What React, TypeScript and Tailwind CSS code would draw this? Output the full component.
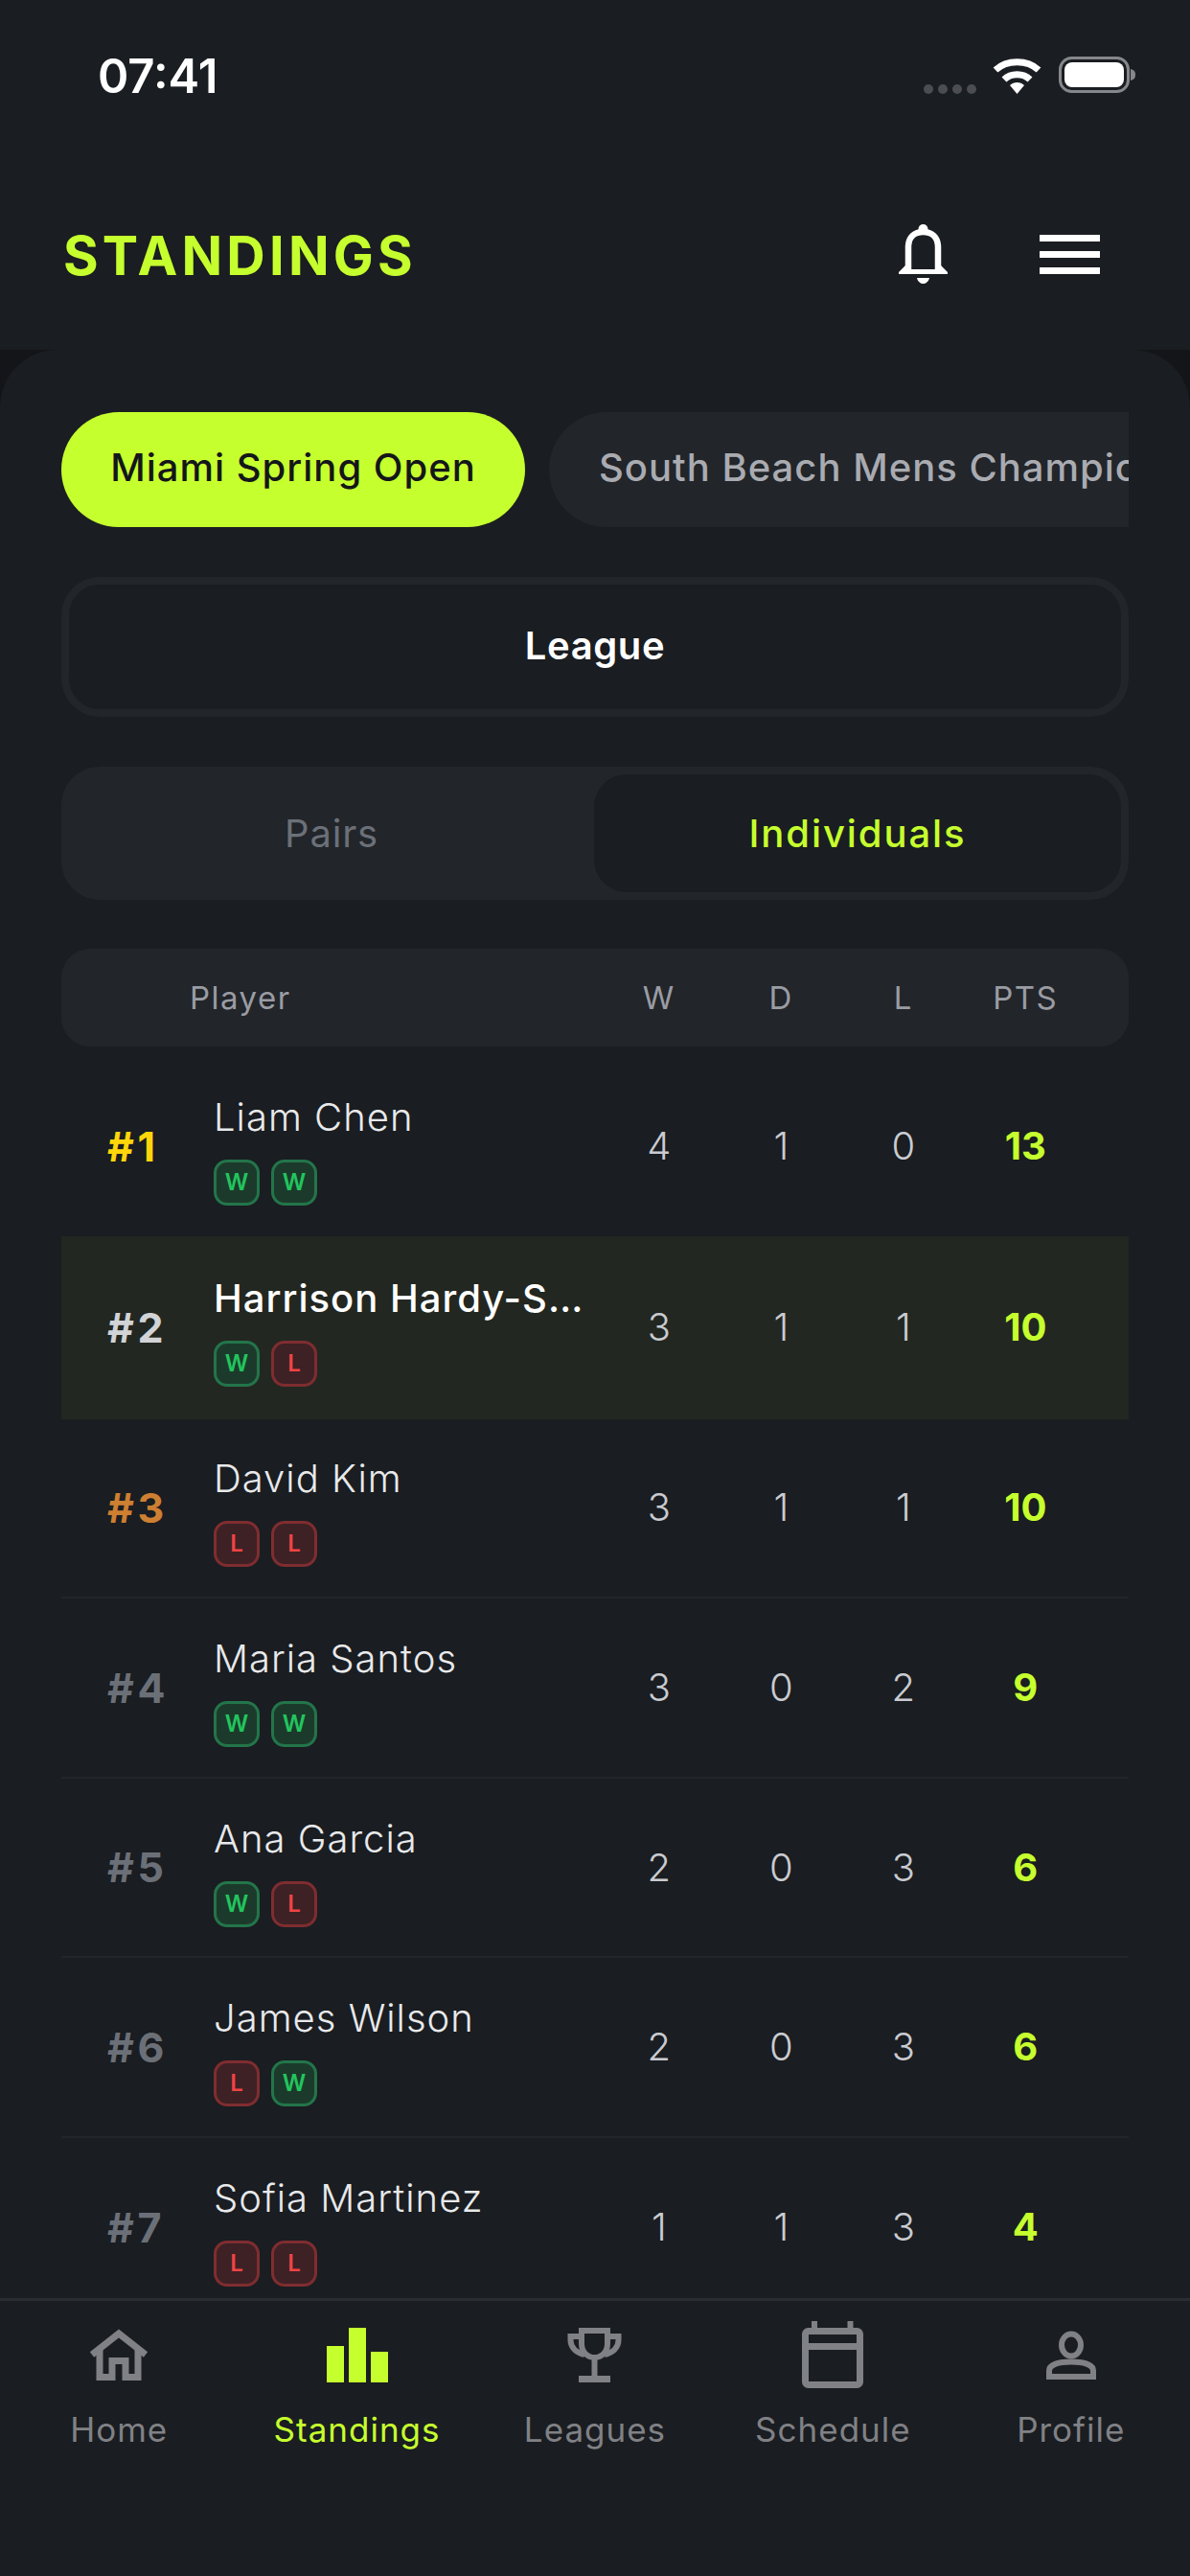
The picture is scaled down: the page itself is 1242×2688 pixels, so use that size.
const players = [
  { rank: 1, name: "Liam Chen", form: ["W", "W"], w: 4, d: 1, l: 0, pts: 13 },
  { rank: 2, name: "Harrison Hardy-Smith", form: ["W", "L"], w: 3, d: 1, l: 1, pts: 10, me: true },
  { rank: 3, name: "David Kim", form: ["L", "L"], w: 3, d: 1, l: 1, pts: 10 },
  { rank: 4, name: "Maria Santos", form: ["W", "W"], w: 3, d: 0, l: 2, pts: 9 },
  { rank: 5, name: "Ana Garcia", form: ["W", "L"], w: 2, d: 0, l: 3, pts: 6 },
  { rank: 6, name: "James Wilson", form: ["L", "W"], w: 2, d: 0, l: 3, pts: 6 },
  { rank: 7, name: "Sofia Martinez", form: ["L", "L"], w: 1, d: 1, l: 3, pts: 4 },
];

function rankColor(rank: number) {
  if (rank === 1) return "text-[#ffd60a]";
  if (rank === 2) return "text-[#d1d3d6]";
  if (rank === 3) return "text-[#cd7f32]";
  return "text-[#6b7078]";
}

function StatusBar() {
  return (
    <div className="flex items-center justify-between h-[40px] pl-[102px] pr-[57px]">
      <span className="text-[49px] font-semibold leading-none text-white mt-[2px]">07:41</span>
      <div className="flex items-center">
        <div className="flex gap-[5px] mt-[30px] mr-[17px]">
          <div className="w-[10px] h-[10px] rounded-full bg-[#4b4d52]" />
          <div className="w-[10px] h-[10px] rounded-full bg-[#4b4d52]" />
          <div className="w-[10px] h-[10px] rounded-full bg-[#4b4d52]" />
          <div className="w-[10px] h-[10px] rounded-full bg-[#4b4d52]" />
        </div>
        <svg width="51" height="39" viewBox="0 0 51 39" fill="none" className="mr-[18px]">
          <path d="M3 14 C15 3 36 3 48 14" stroke="#fff" strokeWidth="7" />
          <path d="M12 24 C19 17 32 17 39 24" stroke="#fff" strokeWidth="7" />
          <path d="M18 30 C22 26 29 26 33 30 L25.5 39 Z" fill="#fff" />
        </svg>
        <svg width="80" height="38" viewBox="0 0 80 38" fill="none">
          <rect x="1.5" y="1.5" width="71" height="35" rx="12" stroke="#85878b" strokeWidth="3" />
          <rect x="6" y="6" width="62" height="26" rx="8" fill="#fff" />
          <path d="M75 13 C79 14 80 16 80 19 C80 22 79 24 75 25 Z" fill="#85878b" />
        </svg>
      </div>
    </div>
  );
}

function Badge({ value }: { value: string }) {
  const win = value === "W";
  return (
    <div
      className={`flex items-center justify-center w-[48px] h-[48px] rounded-[14px] border-[3px] text-[24px] font-semibold ${
        win
          ? "bg-[#1c3a2b] border-[#23754a] text-[#22c55e]"
          : "bg-[#3d2125] border-[#7f2d30] text-[#ef4444]"
      }`}
    >
      {value}
    </div>
  );
}

function HomeIcon() {
  return (
    <svg width="64" height="54" viewBox="0 0 64 54" fill="none" stroke="#808185" strokeWidth="7">
      <path d="M4 27 L32 5 L60 27" />
      <path d="M12 22 V50.5 H25 V33.5 H39 V50.5 H52 V22" />
    </svg>
  );
}

function ChartIcon() {
  return (
    <svg width="64" height="57" viewBox="0 0 64 57" fill="#c6ff2e">
      <rect x="0" y="19" width="18" height="38" />
      <rect x="23" y="0" width="18" height="57" />
      <rect x="46" y="25" width="18" height="32" />
    </svg>
  );
}

function TrophyIcon() {
  return (
    <svg width="57" height="57" viewBox="0 0 57 57" fill="none" stroke="#808185" strokeWidth="6">
      <path d="M15 3 H42 V17 C42 25 36 31 28.5 31 C21 31 15 25 15 17 Z" />
      <path d="M15 9 H3.5 V13 C3.5 21 10 26 18 28" />
      <path d="M42 9 H53.5 V13 C53.5 21 47 26 39 28" />
      <path d="M28.5 31 V52" />
      <path d="M12 53.5 H45" strokeWidth="7" />
    </svg>
  );
}

function CalendarIcon() {
  return (
    <svg width="64" height="70" viewBox="0 0 64 70" fill="none" stroke="#808185" strokeWidth="7">
      <rect x="3.5" y="10.5" width="57" height="56" rx="3" />
      <path d="M3.5 26.5 H60.5" />
      <path d="M13 0 V8" strokeWidth="6" />
      <path d="M50.5 0 V8" strokeWidth="6" />
    </svg>
  );
}

function ProfileIcon() {
  return (
    <svg width="52" height="51" viewBox="0 0 52 51" fill="none" stroke="#808185" strokeWidth="6">
      <ellipse cx="26" cy="15" rx="10" ry="11.5" />
      <path d="M3 48 V42 C3 35 14 32.5 26 32.5 C38 32.5 49 35 49 42 V48 Z" />
    </svg>
  );
}

function NavItem({ label, active, children }: { label: string; active?: boolean; children: React.ReactNode }) {
  return (
    <div className="w-[248.4px] flex flex-col items-center">
      <div className="h-[70px] flex items-center justify-center">{children}</div>
      <span
        className={`mt-[21px] text-[35px] leading-[44px] tracking-[1px] ${
          active ? "text-[#c6ff2e]" : "text-[#808185]"
        }`}
      >
        {label}
      </span>
    </div>
  );
}

export default function App() {
  return (
    <div
      className="w-[1242px] h-[2688px] overflow-hidden flex flex-col bg-[#141518]"
      style={{ fontFamily: "Inter, 'Noto Sans', sans-serif" }}
    >
      <header className="h-[365px] shrink-0 bg-[#1a1d21] pt-[58px]">
        <StatusBar />
        <div className="mt-[136px] h-[62px] flex items-center justify-between pl-[66px] pr-[94px]">
          <h1 className="text-[56px] font-bold leading-none tracking-[4.2px] text-[#c6ff2e] mt-[3px]">STANDINGS</h1>
          <div className="flex items-center gap-[96px]">
            <svg width="51" height="62" viewBox="0 0 51 62" fill="none">
              <circle cx="25.5" cy="5" r="5" fill="#fff" />
              <path d="M10 47 V24 C10 13 17 8 25.5 8 C34 8 41 13 41 24 V47" stroke="#fff" strokeWidth="6.5" />
              <path d="M8 42 L0 50 V52 H51 V50 L43 42 V47 H8 Z" fill="#fff" />
              <path d="M19 56 H32 C31 60 28 62 25.5 62 C23 62 20 60 19 56 Z" fill="#fff" />
            </svg>
            <div className="flex flex-col gap-[10px]">
              <div className="w-[63px] h-[7px] bg-white" />
              <div className="w-[63px] h-[7px] bg-white" />
              <div className="w-[63px] h-[7px] bg-white" />
            </div>
          </div>
        </div>
      </header>

      <main className="flex-1 min-h-0 overflow-hidden rounded-t-[60px] bg-[#1a1d21] px-[64px] pt-[65px]">
        <div className="flex gap-[25px] h-[120px] overflow-hidden">
          <div className="shrink-0 h-full w-[484px] rounded-full bg-[#c6ff2e] flex items-center justify-center pb-[5px] text-[40px] font-medium tracking-[1px] whitespace-nowrap text-[#14161a]">
            Miami Spring Open
          </div>
          <div className="shrink-0 h-full rounded-full bg-[#22252a] flex items-center px-[52px] pb-[5px] text-[40px] font-medium tracking-[1px] text-[#a9abb1] whitespace-nowrap">
            South Beach Mens Championship
          </div>
        </div>

        <div className="mt-[52px] h-[146px] rounded-[40px] border-[8px] border-[#22252a] flex items-center justify-center pb-[3px] text-[40px] font-semibold tracking-[0.6px] text-white">
          League
        </div>

        <div className="mt-[52px] h-[139px] rounded-[40px] bg-[#22252a] p-[8px] flex">
          <div className="flex-1 flex items-center justify-center text-[40px] font-normal tracking-[0.8px] text-[#6b7078]">
            Pairs
          </div>
          <div className="w-[550px] rounded-[34px] bg-[#1a1d21] flex items-center justify-center text-[40px] font-medium tracking-[1.9px] text-[#c6ff2e]">
            Individuals
          </div>
        </div>

        <div className="mt-[51px] h-[102px] rounded-[30px] bg-[#22252a] flex items-center pl-[134px] pt-[2px] text-[33px] font-normal tracking-[1.5px] text-[#9a9ca3]">
          <div className="w-[426px]">Player</div>
          <div className="w-[127.5px] text-center">W</div>
          <div className="w-[127.5px] text-center">D</div>
          <div className="w-[127.5px] text-center">L</div>
          <div className="w-[127.5px] text-center">PTS</div>
        </div>

        <div className="mt-[10px]">
          {players.map((p) => (
            <div
              key={p.rank}
              className={`flex items-center pl-[48px] ${p.me ? "h-[191px] bg-[#232721]" : "h-[187.6px]"} ${
                p.rank > 2 ? "border-b-2 border-[#22252a]" : ""
              }`}
            >
              <div className={`w-[111px] text-[43px] font-bold tracking-[3.5px] ${rankColor(p.rank)}`}>#{p.rank}</div>
              <div className="w-[401px] pr-[12px] pt-[8px]">
                <div
                  className={`truncate text-[40px] leading-[48px] tracking-[1px] ${
                    p.me ? "font-medium text-white" : "font-light text-[#e8e9eb]"
                  }`}
                >
                  {p.name}
                </div>
                <div className="mt-[20px] flex gap-[12px]">
                  {p.form.map((f, i) => (
                    <Badge key={i} value={f} />
                  ))}
                </div>
              </div>
              <div className="w-[127.5px] text-center text-[40px] font-light text-[#c9cbd0]">{p.w}</div>
              <div className="w-[127.5px] text-center text-[40px] font-light text-[#c9cbd0]">{p.d}</div>
              <div className="w-[127.5px] text-center text-[40px] font-light text-[#c9cbd0]">{p.l}</div>
              <div className="w-[127.5px] text-center text-[40px] font-bold text-[#c6ff2e]">{p.pts}</div>
            </div>
          ))}
        </div>
      </main>

      <nav className="h-[290px] shrink-0 bg-[#1a1d21] border-t-[3px] border-[#2a2d33] pt-[21px] flex">
        <NavItem label="Home"><HomeIcon /></NavItem>
        <NavItem label="Standings" active><ChartIcon /></NavItem>
        <NavItem label="Leagues"><TrophyIcon /></NavItem>
        <NavItem label="Schedule"><CalendarIcon /></NavItem>
        <NavItem label="Profile"><ProfileIcon /></NavItem>
      </nav>
    </div>
  );
}
